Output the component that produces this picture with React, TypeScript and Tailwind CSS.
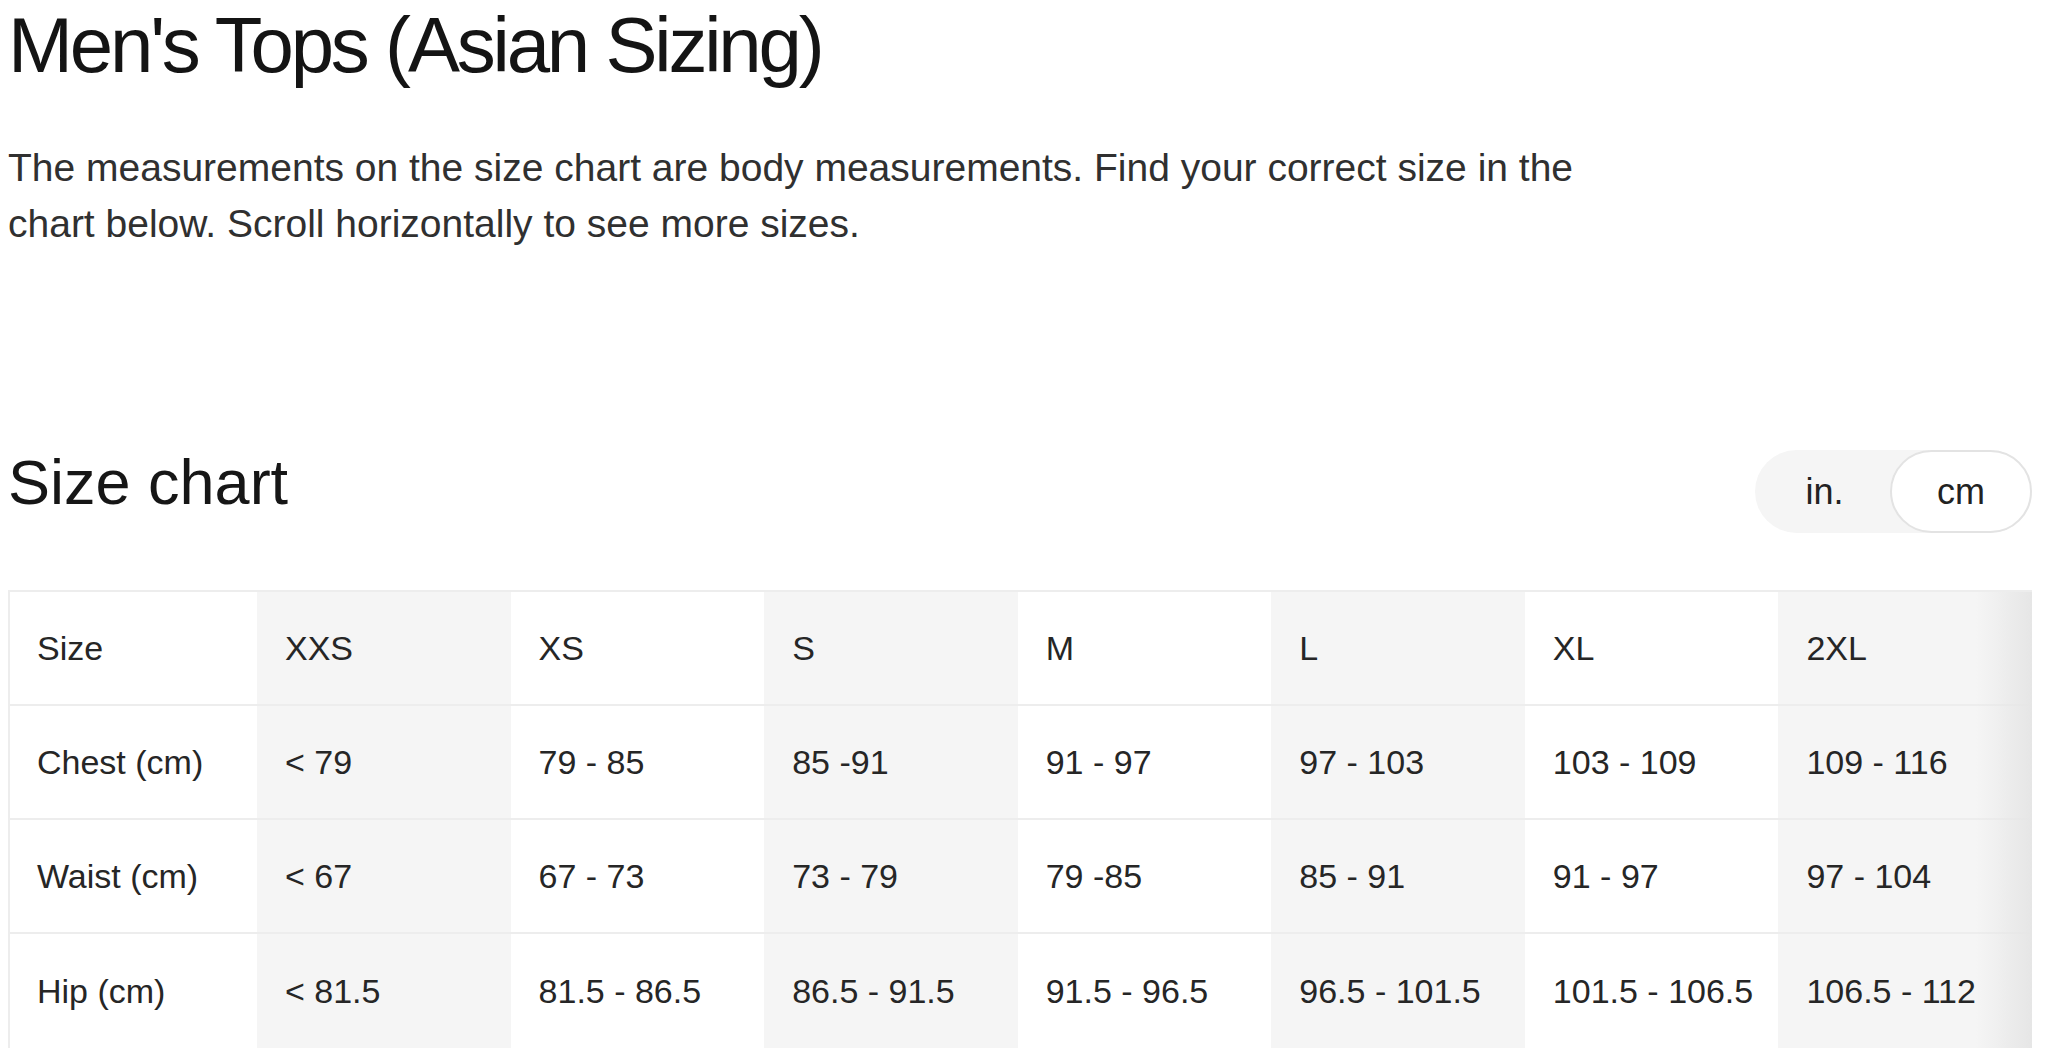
import React from "react";

const sizes = ["XXS", "XS", "S", "M", "L", "XL", "2XL"];
const rows: { label: string; values: string[] }[] = [
  { label: "Chest (cm)", values: ["< 79", "79 - 85", "85 -91", "91 - 97", "97 - 103", "103 - 109", "109 - 116"] },
  { label: "Waist (cm)", values: ["< 67", "67 - 73", "73 - 79", "79 -85", "85 - 91", "91 - 97", "97 - 104"] },
  { label: "Hip (cm)", values: ["< 81.5", "81.5 - 86.5", "86.5 - 91.5", "91.5 - 96.5", "96.5 - 101.5", "101.5 - 106.5", "106.5 - 112"] },
];

function Row({ label, values, last }: { label: string; values: string[]; last?: boolean }) {
  return (
    <div
      className={
        "grid grid-cols-[247px_repeat(7,minmax(0,1fr))] h-[114px] " +
        (last ? "" : "border-b-2 border-[#ededed]")
      }
    >
      <div className="flex items-center pl-[27px] bg-white">{label}</div>
      {values.map((v, i) => (
        <div
          key={i}
          className={
            "flex items-center pl-[28px] " + (i % 2 === 0 ? "bg-[#f5f5f5]" : "bg-white")
          }
        >
          {v}
        </div>
      ))}
    </div>
  );
}

export default function App() {
  return (
    <div
      className="w-[2048px] h-[1055px] bg-white overflow-hidden pl-[8px] pr-[16px]"
      style={{ fontFamily: '"Liberation Sans", Arial, Helvetica, sans-serif' }}
    >
      <h1 className="pt-[6px] text-[78px] leading-[78px] tracking-[-3.2px] text-[#141414]">
        Men's Tops (Asian Sizing)
      </h1>
      <p className="mt-[56px] w-[1640px] text-[39px] leading-[56px] text-[#303030]">
        The measurements on the size chart are body measurements. Find your correct size in the chart below. Scroll horizontally to see more sizes.
      </p>

      <div className="mt-[198px] flex items-start justify-between">
        <h2 className="pt-[1px] text-[63px] leading-[62px] text-[#161616]">Size chart</h2>
        <div className="flex h-[83px] w-[277px] rounded-full bg-[#f5f5f5]">
          <div className="flex flex-1 items-center justify-center pl-[4px] text-[36px] text-[#222222]">in.</div>
          <div className="flex w-[142px] items-center justify-center rounded-full border-2 border-[#e3e3e3] bg-white text-[36px] text-[#222222]">
            cm
          </div>
        </div>
      </div>

      <div className="relative mt-[57px] border-l-2 border-t-2 border-[#ededed] text-[34px] text-[#262626]">
        <Row label="Size" values={sizes} />
        {rows.map((r, i) => (
          <Row key={r.label} label={r.label} values={r.values} last={i === rows.length - 1} />
        ))}
        <div className="pointer-events-none absolute right-0 top-0 bottom-0 w-[56px] bg-gradient-to-r from-transparent to-[#e6e6e6]" />
      </div>
    </div>
  );
}
